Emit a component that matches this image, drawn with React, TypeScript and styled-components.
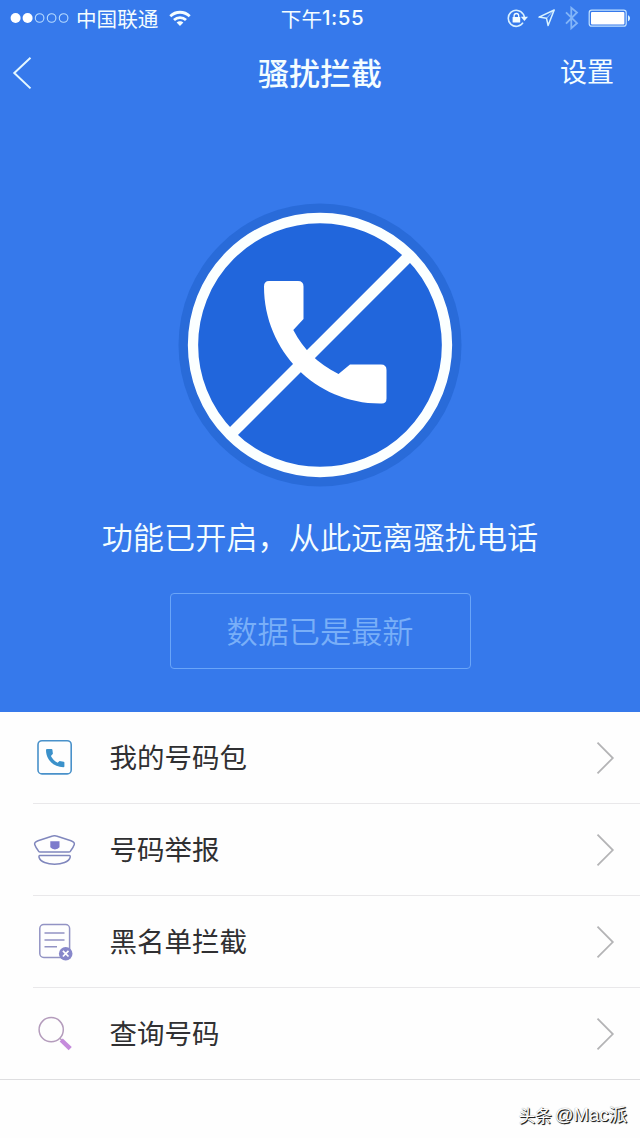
import React from 'react';
import styled, { createGlobalStyle } from 'styled-components';

const GlobalStyle = createGlobalStyle`
  * { box-sizing: border-box; }
  body {
    margin: 0;
    background: #fefefe;
    font-family: "Noto Sans CJK SC", sans-serif;
  }
`;

const Screen = styled.main`
  width: 640px;
  height: 1138px;
  display: flex;
  flex-direction: column;
  overflow: hidden;
`;

const Hero = styled.section`
  height: 712px;
  flex: none;
  background: #3679eb;
  color: #f4fdff;
  display: flex;
  flex-direction: column;
  align-items: center;
`;

const StatusBar = styled.header`
  width: 100%;
  height: 36px;
  padding: 0 9px 2px 10px;
  display: grid;
  grid-template-columns: 1fr auto 1fr;
  align-items: center;
  font-size: 20.6px;
  line-height: 34px;
`;

const Carrier = styled.div`
  display: flex;
  align-items: center;

  svg { margin-top: 1px; }
`;

const CarrierName = styled.span`
  margin: 0 11px 0 7px;
`;

const Clock = styled.time`
  display: flex;
  align-items: center;
  padding-left: 4px;
`;

const Digits = styled.span`
  padding-top: 1px;
  font-family: Inter, sans-serif;
  font-weight: 500;
  font-size: 20.5px;
  letter-spacing: 0.5px;
`;

const Indicators = styled.div`
  display: flex;
  justify-content: flex-end;
  align-items: center;
  padding-top: 2px;
`;

const NavBar = styled.nav`
  width: 100%;
  height: 74px;
  padding: 0 26px 0 12px;
  display: grid;
  grid-template-columns: 1fr auto 1fr;
  align-items: center;
`;

const Title = styled.h1`
  margin: -3px 0 0;
  padding-left: 14px;
  font-size: 31px;
  line-height: 44px;
  font-weight: 500;
`;

const Settings = styled.span`
  justify-self: end;
  font-size: 27px;
  line-height: 40px;
  margin-top: -5px;
`;

const Emblem = styled.svg`
  margin-top: 92px;
  width: 286px;
  height: 286px;
  flex: none;
`;

const Message = styled.p`
  margin: 25px 0 0;
  font-size: 31.2px;
  line-height: 46px;
  font-weight: 350;
  white-space: nowrap;
`;

const UpdateButton = styled.button`
  margin-top: 34px;
  width: 301px;
  height: 76px;
  padding: 0 0 2px;
  border: 1.5px solid #6aa5f8;
  border-radius: 4px;
  background: transparent;
  color: #79aff8;
  font: 350 31.2px/46px "Noto Sans CJK SC", sans-serif;
`;

const List = styled.ul`
  margin: 0;
  padding: 0;
  list-style: none;
  border-bottom: 1px solid #dedee0;
`;

const Row = styled.li`
  height: 92px;
  padding-left: 33px;
  display: flex;

  &:last-child { height: 91px; }
`;

const RowBody = styled.div<{ $divided: boolean }>`
  flex: 1;
  display: flex;
  align-items: center;
  padding-right: 25px;
  border-bottom: ${({ $divided }) => ($divided ? '1px solid #e9e8ea' : 'none')};
`;

const IconSlot = styled.span`
  width: 76.5px;
  height: 44px;
  display: flex;
`;

const Label = styled.span`
  flex: 1;
  padding-bottom: 3px;
  font-size: 27.5px;
  line-height: 40px;
  color: #303032;
`;

const Footer = styled.footer`
  flex: 1;
  display: flex;
  justify-content: flex-end;
  align-items: center;
  padding: 12px 13px 0 0;
  color: #fff;
  font-size: 16.5px;
  line-height: 24px;
  text-shadow: 1px 1px 0 #222, 1px 1px 1px #555, 0 0 1px #888;
`;

const Handle = styled.span`
  margin-left: 3px;
  font-family: "Liberation Sans", "Noto Sans CJK SC", sans-serif;
  font-size: 18.5px;
`;

const SignalDots = () => (
  <svg width="59" height="14" viewBox="0 0 59 14">
    {[0, 1, 2, 3, 4].map((i) => (
      <circle
        key={i}
        cx={5.6 + i * 12}
        cy="7"
        r={i < 2 ? 5 : 4.3}
        fill={i < 2 ? '#fff' : 'none'}
        stroke={i < 2 ? 'none' : '#b8dcff'}
        strokeWidth="1.1"
      />
    ))}
  </svg>
);

const Wifi = () => (
  <svg width="22" height="17" viewBox="0 0 22 17" fill="none" stroke="#f4fdff" strokeWidth="2.8">
    <path d="M1.3 6.2C6.8.9 15.2.9 20.7 6.2" />
    <path d="M5 10c3.4-3.2 8.6-3.2 12 0" />
    <path d="M7.6 12.5 11 16l3.4-3.5c-1.9-1.8-4.9-1.8-6.8 0Z" fill="#f4fdff" stroke="none" />
  </svg>
);

const StatusIcons = () => (
  <svg width="126" height="26" viewBox="505 5 126 26" fill="none">
    <path d="M523.1 13.2A8 8 0 1 0 523 21.6" stroke="#d8f0ff" strokeWidth="1.6" />
    <path d="M523.2 12.8A8 8 0 0 1 524.3 17" stroke="#d8f0ff" strokeWidth="1.6" />
    <path d="M520.8 15.8h7.2l-3.6 4.3Z" fill="#e8f8ff" />
    <rect x="512.6" y="16" width="7.6" height="5.6" rx=".6" fill="#f4fdff" />
    <path d="M514.1 16.5v-1.7a2.3 2.3 0 0 1 4.6 0v1.7" stroke="#f4fdff" strokeWidth="1.3" />
    <path d="M554.2 9 539 16.1l7.5 1.2 1.6 7.2Z" stroke="#d8f2ff" strokeWidth="1.5" strokeLinejoin="round" />
    <path d="m546.5 17.3 7.7-8.3" stroke="#d8f2ff" strokeWidth=".7" />
    <path d="m566 11.4 11 10.8-5.7 5V6.8l5.7 4.7L566 22.6" stroke="#83b5f8" strokeWidth="1.8" />
    <rect x="589.2" y="9.2" width="37" height="16" rx="2.5" stroke="#c2e2ff" strokeWidth="1.2" />
    <rect x="591" y="11" width="33.4" height="12.4" rx="1" fill="#fff" />
    <path d="M628 14.2c2.7.8 2.7 5.2 0 6Z" fill="#d8f2ff" />
  </svg>
);

const BackArrow = () => (
  <svg width="22" height="36" viewBox="0 0 22 36" fill="none" stroke="#e5f8ff" strokeWidth="2">
    <path d="M18.5 2.8 2.3 18l16.2 15.4" />
  </svg>
);

const BlockedCall = () => (
  <Emblem viewBox="177 202 286 286">
    <circle cx="320" cy="345" r="141.500" fill="#296bd9" />
    <circle cx="320" cy="345" r="127" fill="#2166dc" stroke="#fbffff" strokeWidth="10.3" />
    <path d="m231.500 433.500 178-178" stroke="#fbffff" strokeWidth="11.2" />
    <path
      d="M269 281H298Q303.500 281 303.500 286.500V319L293.300 330C304 350 317 363 338.500 374L350 364.500H381Q386.500 364.500 386.500 370V398.500Q386.500 404 381 403.500C316 404 264 351 264 286.500Q264 281 269 281Z"
      fill="#fff"
    />
  </Emblem>
);

const PackageIcon = () => (
  <svg width="44" height="44" viewBox="33 736 44 44" fill="none">
    <rect x="38" y="740.7" width="33.200" height="33.200" rx="4" stroke="#4991ca" strokeWidth="1.6" />
    <path
      d="M47 749h4.500q.8 0 .9.8l.5 4-2 2.300c1.500 3 3.800 5.200 6.700 6.600l2-1.700 4 .7q.8.1.8.9v3.600q0 1-1 1C53.500 767.200 46 759.500 46 750q0-1 1-1Z"
      fill="#3b91ca"
    />
  </svg>
);

const CapIcon = () => (
  <svg width="44" height="44" viewBox="33 828 44 44" fill="none" stroke="#8087bd" strokeWidth="1.5" strokeLinejoin="round">
    <path d="M52.600 836q1.900-.7 3.800 0l14.600 4.800q3.900 1.500 3.300 3.800-1 3-3.600 6.200-.8 1.200-2 1.200H40.300q-1.200 0-2-1.200-2.600-3.200-3.600-6.200-.6-2.300 3.300-3.800Z" />
    <path d="M39.800 855.500h29.600c.8 0 1 1 .7 2-2.500 8.900-28.500 8.900-31 0-.3-1-.1-2 .7-2Z" />
    <path d="M50.300 841.300h9.200v6q-1.500 2-4.600 2.300-3-.3-4.600-2.300Z" fill="#7d7bcc" stroke="none" />
  </svg>
);

const BlacklistIcon = () => (
  <svg width="44" height="44" viewBox="33 920 44 44" fill="none" stroke="#9293c4" strokeWidth="1.5">
    <rect x="39.800" y="924.600" width="29.800" height="32.800" rx="4" />
    <path d="M44.500 933h20M44.500 940h20M44.500 946.800h12.500" />
    <circle cx="65.700" cy="953.700" r="6.800" fill="#8787ca" stroke="none" />
    <path d="m62.900 950.900 5.600 5.600m0-5.600-5.600 5.600" stroke="#fff" strokeWidth="1.7" />
  </svg>
);

const SearchIcon = () => (
  <svg width="44" height="44" viewBox="33 1012 44 44" fill="none">
    <circle cx="51.200" cy="1029.700" r="12.100" stroke="#b49cbc" strokeWidth="1.5" />
    <path d="m59.800 1038.300 2.800 2.800" stroke="#b49cbc" strokeWidth="1.4" />
    <path d="m61.200 1040 9 8.700" stroke="#c58bdc" strokeWidth="4.500" />
  </svg>
);

const Chevron = () => (
  <svg width="20" height="34" viewBox="0 0 20 34" fill="none" stroke="#b4b4b6" strokeWidth="1.8">
    <path d="m2.500 1.700 15.300 15.400L2.500 32.300" />
  </svg>
);

const items = [
  { label: '我的号码包', Icon: PackageIcon },
  { label: '号码举报', Icon: CapIcon },
  { label: '黑名单拦截', Icon: BlacklistIcon },
  { label: '查询号码', Icon: SearchIcon },
];

export default function App() {
  return (
    <Screen>
      <GlobalStyle />
      <Hero>
        <StatusBar>
          <Carrier>
            <SignalDots />
            <CarrierName>中国联通</CarrierName>
            <Wifi />
          </Carrier>
          <Clock>下午<Digits>1:55</Digits></Clock>
          <Indicators><StatusIcons /></Indicators>
        </StatusBar>
        <NavBar>
          <BackArrow />
          <Title>骚扰拦截</Title>
          <Settings>设置</Settings>
        </NavBar>
        <BlockedCall />
        <Message>功能已开启，从此远离骚扰电话</Message>
        <UpdateButton>数据已是最新</UpdateButton>
      </Hero>
      <List>
        {items.map(({ label, Icon }, i) => (
          <Row key={label}>
            <RowBody $divided={i < items.length - 1}>
              <IconSlot><Icon /></IconSlot>
              <Label>{label}</Label>
              <Chevron />
            </RowBody>
          </Row>
        ))}
      </List>
      <Footer>头条<Handle>@Mac派</Handle></Footer>
    </Screen>
  );
}
